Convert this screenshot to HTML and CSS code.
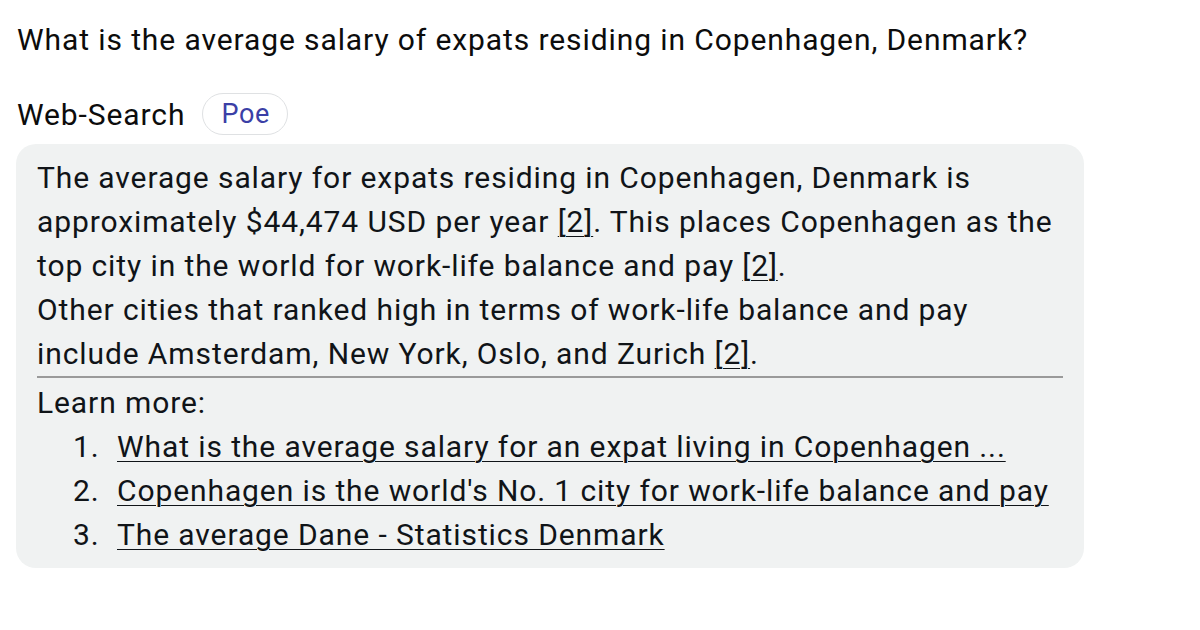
FILE: index.html
```html
<!DOCTYPE html>
<html>
<head>
<meta charset="utf-8">
<link rel="stylesheet" href="styles.css">
</head>
<body>
<div class="page">
  <div class="question">What is the average salary of expats residing in Copenhagen, Denmark?</div>
  <div class="bot-row">
    <span class="bot-name">Web-Search</span>
    <span class="pill">Poe</span>
  </div>
  <div class="bubble">
    <p>The average salary for expats residing in Copenhagen, Denmark is approximately $44,474 USD per year <a class="ref">[2]</a>. This places Copenhagen as the top city in the world for work-life balance and pay <a class="ref">[2]</a>.</p>
    <p>Other cities that ranked high in terms of work-life balance and pay include Amsterdam, New York, Oslo, and Zurich <a class="ref">[2]</a>.</p>
    <hr class="rule">
    <p>Learn more:</p>
    <ol class="links">
      <li><span class="num">1.</span><a>What is the average salary for an expat living in Copenhagen ...</a></li>
      <li><span class="num">2.</span><a>Copenhagen is the world's No. 1 city for work-life balance and pay</a></li>
      <li><span class="num">3.</span><a>The average Dane - Statistics Denmark</a></li>
    </ol>
  </div>
</div>
</body>
</html>
```
FILE: styles.css
```css
html, body {
  margin: 0;
  padding: 0;
  background: #ffffff;
}
body {
  font-family: Roboto, "Liberation Sans", sans-serif;
  color: #111418;
}
.page {
  padding: 18px 16px 0 16px;
  width: 1068px;
}
.question {
  font-size: 30px;
  letter-spacing: 0.9px;
  line-height: 44px;
  color: #0c0c0c;
  padding-left: 1px;
}
.bot-row {
  display: flex;
  align-items: center;
  gap: 17px;
  margin-top: 30px;
  height: 44px;
}
.bot-name {
  font-size: 30px;
  letter-spacing: 0.9px;
  color: #0c0c0c;
  padding-left: 1px;
}
.pill {
  display: inline-flex;
  align-items: center;
  height: 40px;
  padding: 0 17px 0 18px;
  border: 1px solid #dfe1e3;
  border-radius: 21px;
  font-size: 27px;
  letter-spacing: 0.7px;
  color: #3b3fa6;
}
.bubble {
  margin-top: 8px;
  background: #f0f2f2;
  border-radius: 20px;
  padding: 12px 21px 11px 21px;
  font-size: 30px;
  letter-spacing: 0.9px;
  line-height: 44px;
  color: #101418;
}
.bubble p {
  margin: 0;
}
.ref {
  text-decoration: underline;
  text-underline-offset: 4px;
  text-decoration-thickness: 1px;
}
.rule {
  border: 0;
  border-top: 2px solid #9a9a9a;
  margin: 0 0 3px 0;
  height: 0;
}
.links {
  list-style: none;
  margin: 0;
  padding-left: 36px;
}
.links li {
  display: flex;
}
.num {
  width: 44px;
  flex: none;
}
.links a {
  text-decoration: underline;
  text-underline-offset: 4px;
  text-decoration-thickness: 1px;
}
```
